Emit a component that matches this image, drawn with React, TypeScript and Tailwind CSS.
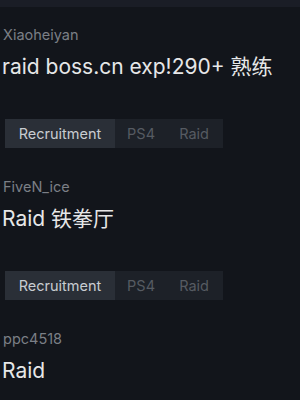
import React from "react";

const items = [
  { user: "Xiaoheiyan", title: "raid boss.cn exp!290+ 熟练", tags: true },
  { user: "FiveN_ice", title: "Raid 铁拳厅", tags: true },
  { user: "ppc4518", title: "Raid", tags: false },
];

export default function App() {
  return (
    <div
      className="w-[300px] h-[400px] overflow-hidden bg-[#12151b]"
      style={{ fontFamily: '"Inter", "Noto Sans CJK SC", sans-serif' }}
    >
      <div className="h-[7px] bg-[#1a1d26]" />
      <div className="flex flex-col pt-[20px]">
        {items.map((it, i) => (
          <div key={i} className="flex flex-col mb-[31px]">
            <div className="h-[16px] leading-[16px] text-[14.5px] text-[#7b7f86] pl-[3px]">
              {it.user}
            </div>
            <div className="mt-[10px] h-[28px] leading-[28px] text-[21px] text-[#e6e7e8] pl-[2px]">
              {it.title}
            </div>
            {it.tags && (
              <div className="mt-[38px] ml-[5px] flex h-[29px] w-[218px] text-[14.5px]">
                <div className="bg-[#2a2f37] text-[#c8ccd1] w-[110px] flex items-center justify-center">
                  Recruitment
                </div>
                <div className="bg-[#1d2128] text-[#565b62] flex-1 flex items-center justify-around pr-[2px]">
                  <span>PS4</span>
                  <span>Raid</span>
                </div>
              </div>
            )}
          </div>
        ))}
      </div>
    </div>
  );
}
